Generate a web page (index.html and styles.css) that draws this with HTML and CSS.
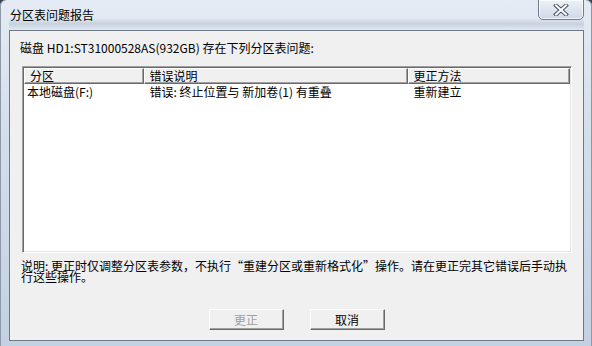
FILE: index.html
```html
<!DOCTYPE html>
<html lang="zh-CN">
<head>
  <meta charset="UTF-8">
  <title>分区表问题报告</title>
  <link rel="stylesheet" href="styles.css">
</head>
<body>
  <!-- Dialog Window -->
  <div class="window">
    <div class="titlebar">
      <span class="title">分区表问题报告</span>
      <div class="close-btn">
        <svg width="18" height="12" viewBox="0 0 18 12">
          <path d="M4 1.5 L14 10.5 M14 1.5 L4 10.5" stroke="#4a5566" stroke-width="4" stroke-linecap="square"/>
          <path d="M4 1.5 L14 10.5 M14 1.5 L4 10.5" stroke="#ffffff" stroke-width="2" stroke-linecap="square"/>
        </svg>
      </div>
    </div>

    <div class="content">
      <div class="prompt">磁盘 HD1:ST31000528AS(932GB) 存在下列分区表问题:</div>

      <!-- List View -->
      <div class="listview">
        <div class="lv-header">
          <div class="lv-col col-1">分区</div>
          <div class="lv-col col-2">错误说明</div>
          <div class="lv-col col-3">更正方法</div>
        </div>
        <div class="lv-row">
          <div class="lv-cell col-1">本地磁盘(F:)</div>
          <div class="lv-cell col-2">错误: 终止位置与 新加卷(1) 有重叠</div>
          <div class="lv-cell col-3">重新建立</div>
        </div>
      </div>

      <div class="note">说明: 更正时仅调整分区表参数，不执行“重建分区或重新格式化”操作。请在更正完其它错误后手动执行这些操作。</div>

      <div class="buttons">
        <div class="btn disabled">更正</div>
        <div class="btn">取消</div>
      </div>
    </div>
  </div>
</body>
</html>
```

FILE: styles.css
```css
/* Reset and Base Styles */
* {
  margin: 0;
  padding: 0;
  box-sizing: border-box;
}
body {
  width: 592px;
  height: 346px;
  overflow: hidden;
  font-family: "Noto Sans CJK SC", "Liberation Sans", sans-serif;
  font-size: 12px;
  color: #000;
  background: #3a4250;
}

.window {
  width: 592px;
  height: 346px;
  display: flex;
  flex-direction: column;
  padding: 0 8px 5px 9px;
  border-radius: 6px 6px 0 0;
  background: linear-gradient(to bottom, #e4ebf4 0%, #d3deeb 40%, #c3d1e2 100%);
  box-shadow: inset 1px 0 0 #8d99a8, inset -1px 0 0 #8d99a8;
}

/* Title Bar */
.titlebar {
  position: relative;
  height: 30px;
  flex: none;
  background: linear-gradient(to bottom, rgba(255,255,255,0) 0%, rgba(255,255,255,0) 60%, rgba(120,140,165,0.25) 80%, rgba(255,255,255,0) 100%);
}
.title {
  display: block;
  padding: 7px 0 0 1px;
  font-size: 12px;
  line-height: 16px;
  color: #000;
}
.close-btn {
  position: absolute;
  top: -1px;
  right: 0;
  width: 46px;
  height: 21px;
  display: flex;
  align-items: center;
  justify-content: center;
  border: 1px solid #6f7d8f;
  border-radius: 0 0 5px 5px;
  background: linear-gradient(to bottom, #eef2f8 0%, #dde5ef 50%, #cfd9e6 100%);
  box-shadow: inset 0 0 0 1px rgba(255,255,255,0.7);
}

/* Client Area */
.content {
  flex: 1;
  display: flex;
  flex-direction: column;
  border: 1px solid #6e7985;
  background: #f0f0f0;
}
.prompt {
  margin: 11px 0 0 10px;
  line-height: 12px;
  white-space: nowrap;
}

.listview {
  width: 550px;
  height: 187px;
  margin: 12px 0 0 12px;
  background: #fff;
  border: 1px solid;
  border-color: #a0a0a0 #fff #fff #a0a0a0;
  box-shadow: inset 1px 1px 0 #696969, inset -1px -1px 0 #e3e3e3;
  padding: 1px;
}
.lv-header {
  display: flex;
  height: 16px;
  width: 546px;
}
.lv-col {
  background: #f0f0f0;
  border-top: 1px solid #fff;
  border-left: 1px solid #fff;
  border-right: 1px solid #696969;
  border-bottom: 1px solid #696969;
  box-shadow: inset -1px -1px 0 #a0a0a0;
  padding-left: 5px;
  line-height: 14px;
  white-space: nowrap;
}
.lv-row {
  display: flex;
  height: 15px;
  line-height: 15px;
}
.lv-cell {
  padding-left: 3px;
  white-space: nowrap;
}
.col-1 { width: 120px; }
.col-2 { width: 265px; }
.col-3 { width: 163px; }
.lv-row .col-1 { padding-left: 3px; }
.lv-row .col-2 { padding-left: 6px; }
.lv-row .col-3 { padding-left: 6px; }

.note {
  width: 556px;
  margin: 7px 0 0 11px;
  line-height: 11px;
}

/* Buttons */
.buttons {
  margin-top: auto;
  padding-bottom: 10px;
  display: flex;
  justify-content: center;
  gap: 26px;
}
.btn {
  width: 75px;
  height: 21px;
  line-height: 19px;
  text-align: center;
  background: #f0f0f0;
  border: 1px solid;
  border-color: #fff #696969 #696969 #fff;
  box-shadow: inset -1px -1px 0 #a0a0a0;
}
.btn.disabled {
  color: #a0a0a0;
}
```
